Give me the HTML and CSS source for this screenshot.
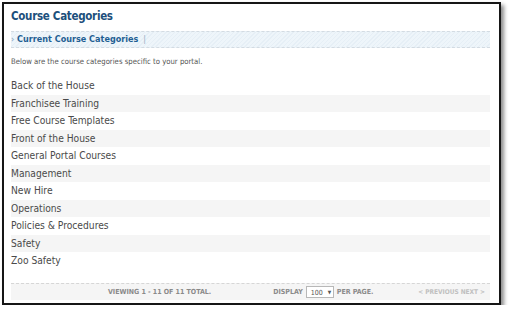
FILE: index.html
```html
<!DOCTYPE html>
<html lang="en">
  <head>
    <meta charset="UTF-8" />
    <title>Course Categories</title>
    <link rel="stylesheet" href="styles.css">
  </head>
  <body>
    <div class="frame">
      <h1 class="page-title">Course Categories</h1>

      <div class="section-bar">
        <span class="section-arrow">&rsaquo;</span>
        <span class="section-name">Current Course Categories</span>
        <span class="section-sep">|</span>
      </div>

      <p class="intro">Below are the course categories specific to your portal.</p>

      <ul class="category-list">
        <li>Back of the House</li>
        <li>Franchisee Training</li>
        <li>Free Course Templates</li>
        <li>Front of the House</li>
        <li>General Portal Courses</li>
        <li>Management</li>
        <li>New Hire</li>
        <li>Operations</li>
        <li>Policies &amp; Procedures</li>
        <li>Safety</li>
        <li>Zoo Safety</li>
      </ul>

      <div class="pager">
        <span class="pager-count">Viewing 1 - 11 of 11 total.</span>
        <span class="pager-size">
          Display
          <span class="page-select">100 <span class="caret">&#9660;</span></span>
          per page.
        </span>
        <span class="pager-nav">&lt; Previous Next &gt;</span>
      </div>
    </div>
  </body>
</html>
```

FILE: styles.css
```css
body {
  margin: 0;
  background: #fff;
  font-family: "DejaVu Sans", Verdana, sans-serif;
  font-stretch: condensed;
  color: #444;
}
.frame {
  box-sizing: border-box;
  width: 499px;
  height: 303px;
  margin: 2px 0 0 2px;
  padding: 4px 9px 0 7px;
  border: 2px solid #161616;
  box-shadow: 3px 3px 4px rgba(0, 0, 0, 0.45);
}
.page-title {
  margin: 0;
  font-size: 11.5px;
  line-height: 17px;
  font-weight: bold;
  letter-spacing: -0.3px;
  color: #1c4f7c;
}
.section-bar {
  margin-top: 6px;
  height: 15px;
  line-height: 15px;
  border-top: 1px dashed #d3dbe2;
  border-bottom: 1px dashed #d3dbe2;
  background: repeating-linear-gradient(
    -45deg,
    #eef5fa 0,
    #eef5fa 2px,
    #e6eff6 2px,
    #e6eff6 3px
  );
  font-size: 9px;
  font-weight: bold;
  color: #1f5f93;
}
.section-arrow {
  color: #7a9bb8;
  font-weight: normal;
}
.section-sep {
  margin-left: 2px;
  color: #9ab0c4;
  font-weight: normal;
}
.intro {
  margin: 9px 0 0;
  font-size: 7.7px;
  line-height: 10px;
  color: #555;
}
.category-list {
  list-style: none;
  margin: 10px 0 0;
  padding: 0;
}
.category-list li {
  height: 17.5px;
  line-height: 17.5px;
  font-size: 10.2px;
  color: #4a4a4a;
}
.category-list li:nth-child(even) {
  background: #f5f5f5;
}
.pager {
  display: flex;
  align-items: center;
  margin-top: 13px;
  height: 16px;
  border-top: 1px dashed #d6d6d6;
  background: #f5f5f5;
  font-size: 7px;
  font-weight: bold;
  text-transform: uppercase;
  color: #8a8a8a;
}
.pager-count {
  margin-left: 97px;
}
.pager-size {
  display: flex;
  align-items: center;
  gap: 3px;
  margin-left: 62px;
}
.page-select {
  box-sizing: border-box;
  width: 28px;
  height: 12px;
  padding-left: 4px;
  border: 1px solid #b8b8b8;
  background: #fff;
  line-height: 10px;
  color: #555;
  font-weight: normal;
}
.caret {
  margin-left: 3px;
  font-size: 5px;
  vertical-align: 1px;
}
.pager-nav {
  margin-left: auto;
  margin-right: 5px;
  font-size: 6.5px;
  color: #c0c0c0;
}
```
